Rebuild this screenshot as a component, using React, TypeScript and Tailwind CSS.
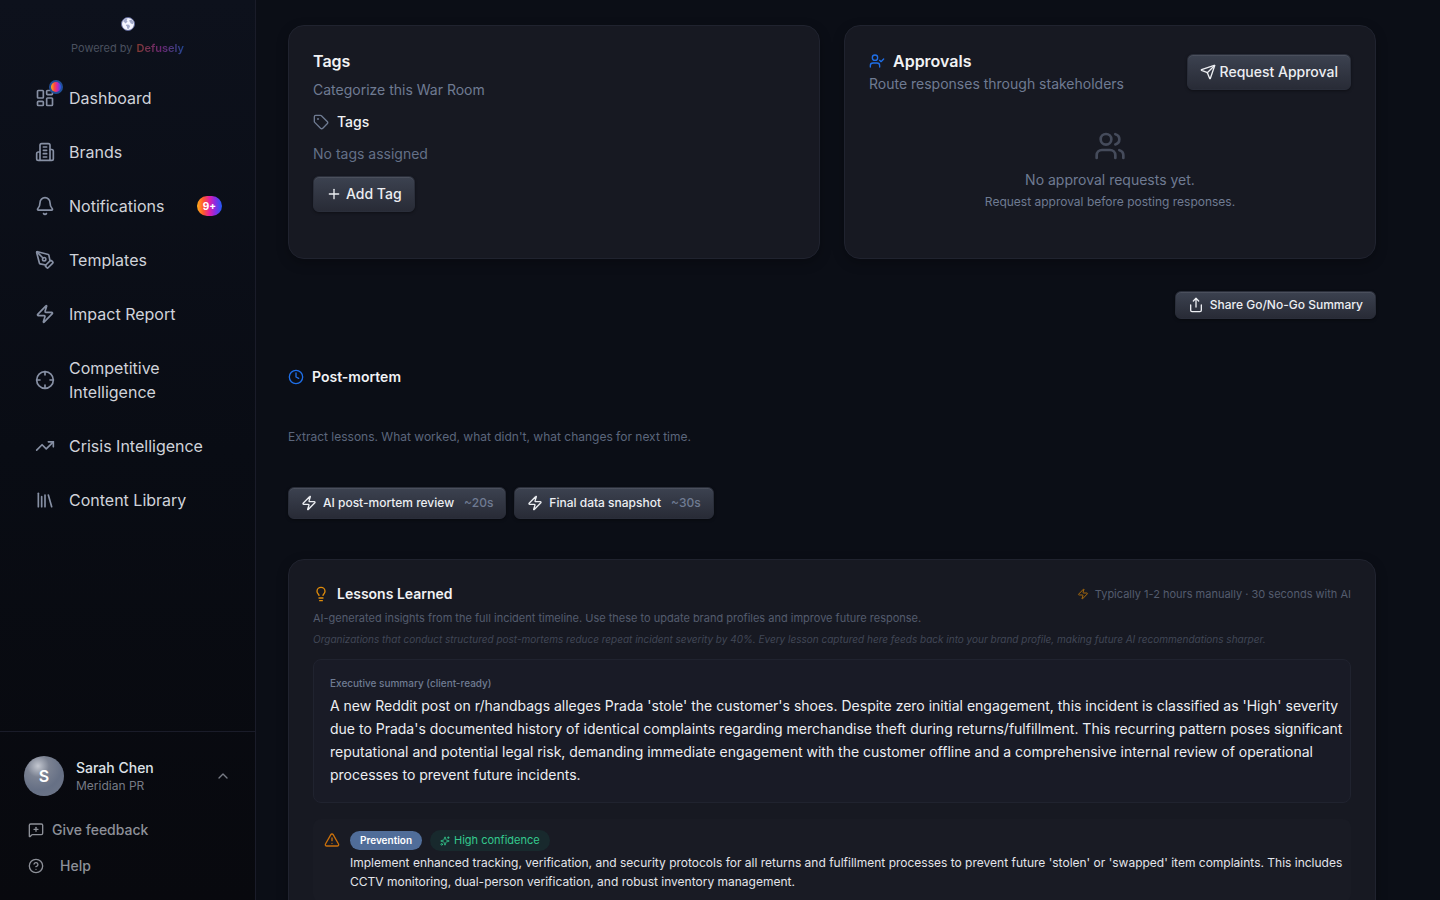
import type { ComponentType, ReactNode } from 'react';
import {
  Bell,
  ChevronUp,
  CircleHelp,
  Clock,
  Crosshair,
  LayoutDashboard,
  Library,
  Lightbulb,
  MessageSquarePlus,
  PenTool,
  Plus,
  Send,
  Share,
  Sparkles,
  Tag,
  TrendingUp,
  TriangleAlert,
  UserCheck,
  Users,
  Zap,
} from 'lucide-react';
import { clsx } from 'clsx';

interface IconProps {
  size?: number;
  strokeWidth?: number;
  className?: string;
}

interface NavItem {
  label: string;
  icon: ComponentType<IconProps>;
  dot?: boolean;
  badge?: string;
}

function BuildingIcon({ size = 24, strokeWidth = 2, className }: IconProps) {
  return (
    <svg
      width={size}
      height={size}
      viewBox="0 0 24 24"
      fill="none"
      stroke="currentColor"
      strokeWidth={strokeWidth}
      strokeLinecap="round"
      strokeLinejoin="round"
      className={className}
      aria-hidden="true"
    >
      <path d="M6 22V4a2 2 0 0 1 2-2h8a2 2 0 0 1 2 2v18Z" />
      <path d="M6 12H4a2 2 0 0 0-2 2v6a2 2 0 0 0 2 2h2" />
      <path d="M18 9h2a2 2 0 0 1 2 2v9a2 2 0 0 1-2 2h-2" />
      <path d="M10 6h4M10 10h4M10 14h4M10 18h4" />
    </svg>
  );
}

const navItems: NavItem[] = [
  { label: 'Dashboard', icon: LayoutDashboard, dot: true },
  { label: 'Brands', icon: BuildingIcon },
  { label: 'Notifications', icon: Bell, badge: '9+' },
  { label: 'Templates', icon: PenTool },
  { label: 'Impact Report', icon: Zap },
  { label: 'Competitive Intelligence', icon: Crosshair },
  { label: 'Crisis Intelligence', icon: TrendingUp },
  { label: 'Content Library', icon: Library },
];

function GlobeLogo() {
  return (
    <svg width="16" height="16" viewBox="0 0 16 16" aria-hidden="true">
      <circle cx="8" cy="8" r="6.5" fill="#f4f5ff" stroke="#5c6596" />
      <path d="M3 5 5 2.8 7.6 2.6 6.6 4.4 7.6 5.6 5.6 7.4 4.6 6.4Z" fill="#a3aacb" />
      <path d="M9 4.6 11.6 3.4 13.6 6.2 13 8.2 10.8 7.4Z" fill="#a3aacb" />
      <path d="M6.6 8.4 9.2 8.8 10 10.6 8.4 13.2 7.2 12.6 7 10.6 5.8 9.4Z" fill="#a3aacb" />
    </svg>
  );
}

function Sidebar() {
  return (
    <aside className="flex w-64 shrink-0 flex-col border-r border-[#1a1c29] bg-linear-to-b from-[#0d111c] via-[#090c14] via-50% to-[#08090e]">
      <div className="flex flex-col items-center pt-4">
        <GlobeLogo />
        <p className="mt-1.5 flex gap-1 text-[11px] leading-5 text-[#4a505f]">
          Powered by
          <span className="bg-linear-to-r from-[#84392f] via-[#6a2470] to-[#1b4590] bg-clip-text font-semibold text-transparent">
            Defusely
          </span>
        </p>
      </div>

      <nav className="mt-4 flex flex-col gap-2 px-3 pt-px">
        {navItems.map(({ label, icon: Icon, dot, badge }) => (
          <a
            key={label}
            href="#"
            className="flex items-center gap-3.5 rounded-lg py-[11px] pr-[21px] pl-[23px] text-base text-[#d0d3da]"
          >
            <span className="relative shrink-0">
              <Icon size={20} strokeWidth={2} className="text-[#8790a4]" />
              {dot && (
                <span className="absolute -top-2 -right-2 flex size-3.5 rounded-full bg-[#22509a] p-0.5">
                  <span className="flex-1 rounded-full bg-[linear-gradient(90deg,#ffb01c,#ff4a3c,#c824b8,#1f5bf5)]" />
                </span>
              )}
            </span>
            {label}
            {badge && (
              <span className="ml-auto rounded-full bg-[linear-gradient(90deg,#ffb01c,#ff5a2a_25%,#e21fa6_50%,#8b2be2_72%,#1f5bf5)] px-1.5 text-[10px] leading-5 font-bold text-white">
                {badge}
              </span>
            )}
          </a>
        ))}
      </nav>

      <div className="mt-auto border-t border-[#1a1c29] px-6 pt-6 pb-4">
        <button type="button" className="flex w-full items-center gap-3 text-left">
          <span className="flex size-10 items-center justify-center rounded-full bg-[radial-gradient(circle_at_35%_25%,#c3c7d0_0%,#7b8292_28%,#667085_60%,#70788a_100%)] text-base font-semibold text-white">
            S
          </span>
          <span className="flex flex-col">
            <span className="text-sm font-medium text-[#dfe2e8]">Sarah Chen</span>
            <span className="text-xs text-[#777b85]">Meridian PR</span>
          </span>
          <ChevronUp size={16} strokeWidth={2} className="ml-auto text-[#777b85]" />
        </button>
        <div className="mt-4 flex flex-col text-sm font-medium text-[#8d9098]">
          <a href="#" className="flex h-9 items-center gap-2 px-1">
            <MessageSquarePlus size={16} strokeWidth={2} />
            Give feedback
          </a>
          <a href="#" className="flex h-9 items-center gap-4 px-1">
            <CircleHelp size={16} strokeWidth={2} />
            Help
          </a>
        </div>
      </div>
    </aside>
  );
}

function Card({ className, children }: { className?: string; children: ReactNode }) {
  return (
    <section
      className={clsx(
        'rounded-2xl border border-[#20232f] bg-[#171922] p-6 shadow-[0_4px_12px_rgba(0,0,0,0.25)]',
        className,
      )}
    >
      {children}
    </section>
  );
}

function Button({ className, children }: { className?: string; children: ReactNode }) {
  return (
    <button
      type="button"
      className={clsx(
        'flex shrink-0 items-center rounded-md border border-[#2a2e3a] bg-linear-to-b from-[#3c4250] to-[#282b36] px-3 font-medium text-[#eceef2] shadow-[inset_0_1px_0_rgba(255,255,255,0.08),0_1px_3px_rgba(0,0,0,0.4)]',
        className,
      )}
    >
      {children}
    </button>
  );
}

function TagsCard() {
  return (
    <Card>
      <h3 className="text-base leading-[22px] font-semibold text-[#f1f2f4]">Tags</h3>
      <p className="mt-2 text-sm text-[#6f7b92]">Categorize this War Room</p>
      <div className="mt-3 flex items-center gap-2 text-sm font-medium text-[#f1f2f4]">
        <Tag size={16} strokeWidth={2} className="text-[#6f7b92]" />
        Tags
      </div>
      <p className="mt-3 text-sm text-[#647087]">No tags assigned</p>
      <Button className="mt-3 h-9 gap-1 text-sm">
        <Plus size={16} strokeWidth={2} />
        Add Tag
      </Button>
    </Card>
  );
}

function ApprovalsCard() {
  return (
    <Card>
      <div className="flex items-center justify-between">
        <div>
          <h3 className="flex items-center gap-2 text-base leading-[22px] font-semibold text-[#f1f2f4]">
            <UserCheck size={16} strokeWidth={2} className="text-[#1f6fe8]" />
            Approvals
          </h3>
          <p className="mt-0.5 text-sm text-[#6f7b92]">Route responses through stakeholders</p>
        </div>
        <Button className="h-9 gap-1 text-sm">
          <Send size={16} strokeWidth={2} />
          Request Approval
        </Button>
      </div>
      <div className="flex flex-col items-center pt-9 pb-6 text-[#6f7b92]">
        <Users size={32} strokeWidth={2} className="text-[#454b5b]" />
        <p className="mt-2 text-sm">No approval requests yet.</p>
        <p className="mt-1 text-xs">Request approval before posting responses.</p>
      </div>
    </Card>
  );
}

function LessonsLearned() {
  return (
    <Card className="mt-10">
      <div className="flex items-center justify-between">
        <h3 className="flex items-center gap-2 text-sm font-semibold text-[#f1f2f4]">
          <Lightbulb size={16} strokeWidth={2} className="text-[#e08c0b]" />
          Lessons Learned
        </h3>
        <p className="flex items-center gap-1.5 text-[11px] text-[#545c6e]">
          <Zap size={12} strokeWidth={2} className="text-[#a86a0c]" />
          Typically 1-2 hours manually · 30 seconds with AI
        </p>
      </div>
      <p className="mt-1.5 text-[11px] leading-4 text-[#545c6e]">
        AI-generated insights from the full incident timeline. Use these to update brand profiles and improve future
        response.
      </p>
      <p className="mt-1.5 text-[10px] leading-[15px] text-[#414756] italic">
        Organizations that conduct structured post-mortems reduce repeat incident severity by 40%. Every lesson captured
        here feeds back into your brand profile, making future AI recommendations sharper.
      </p>

      <div className="mt-3 rounded-lg border border-[#20232f] bg-[#191b26] py-4 pr-1 pl-4">
        <p className="text-[10px] leading-[15px] font-medium text-[#6f7b92]">Executive summary (client-ready)</p>
        <p className="mt-[3px] text-sm leading-[23px] text-[#eceef2]">
          A new Reddit post on r/handbags alleges Prada 'stole' the customer's shoes. Despite zero initial engagement,
          this incident is classified as 'High' severity due to Prada's documented history of identical complaints
          regarding merchandise theft during returns/fulfillment. This recurring pattern poses significant reputational
          and potential legal risk, demanding immediate engagement with the customer offline and a comprehensive internal
          review of operational processes to prevent future incidents.
        </p>
      </div>

      <div className="mt-4 flex gap-2.5 rounded-lg bg-[#191b24] py-[11px] pr-1 pl-[11px]">
        <TriangleAlert size={16} strokeWidth={2} className="mt-0.5 shrink-0 text-[#c9700c]" />
        <div>
          <div className="flex items-center gap-2">
            <span className="rounded-full bg-[#506d99] px-2.5 text-[10px] leading-[19px] font-semibold text-white">
              Prevention
            </span>
            <span className="flex items-center gap-1 rounded-full bg-[#18292d] px-2.5 text-[11px] leading-[21px] text-[#34c98e]">
              <Sparkles size={10} strokeWidth={2} />
              High confidence
            </span>
          </div>
          <p className="mt-0.5 text-xs leading-[19px] text-[#e3e5ea]">
            Implement enhanced tracking, verification, and security protocols for all returns and fulfillment processes
            to prevent future 'stolen' or 'swapped' item complaints. This includes CCTV monitoring, dual-person
            verification, and robust inventory management.
          </p>
        </div>
      </div>
    </Card>
  );
}

export default function App() {
  return (
    <div className="flex h-screen overflow-hidden bg-[#0b0e16] font-['Inter',sans-serif] antialiased">
      <Sidebar />
      <main className="min-w-0 flex-1 overflow-hidden pt-[25px] pr-16 pl-8">
        <div className="grid grid-cols-2 gap-6">
          <TagsCard />
          <ApprovalsCard />
        </div>

        <div className="mt-8 flex justify-end">
          <Button className="h-7 gap-1.5 text-xs">
            <Share size={16} strokeWidth={2} />
            Share Go/No-Go Summary
          </Button>
        </div>

        <h2 className="mt-12 flex items-center gap-2 text-sm font-semibold text-[#f1f2f4]">
          <Clock size={16} strokeWidth={2} className="text-[#1f6fe8]" />
          Post-mortem
        </h2>
        <p className="mt-10 text-xs leading-5 text-[#5b667c]">
          Extract lessons. What worked, what didn't, what changes for next time.
        </p>
        <div className="mt-10 flex gap-2">
          <Button className="h-8 gap-1.5 text-xs">
            <Zap size={16} strokeWidth={2} />
            AI post-mortem review
            <span className="ml-1 text-[#6f7b92]">~20s</span>
          </Button>
          <Button className="h-8 gap-1.5 text-xs">
            <Zap size={16} strokeWidth={2} />
            Final data snapshot
            <span className="ml-1 text-[#6f7b92]">~30s</span>
          </Button>
        </div>

        <LessonsLearned />
      </main>
    </div>
  );
}
